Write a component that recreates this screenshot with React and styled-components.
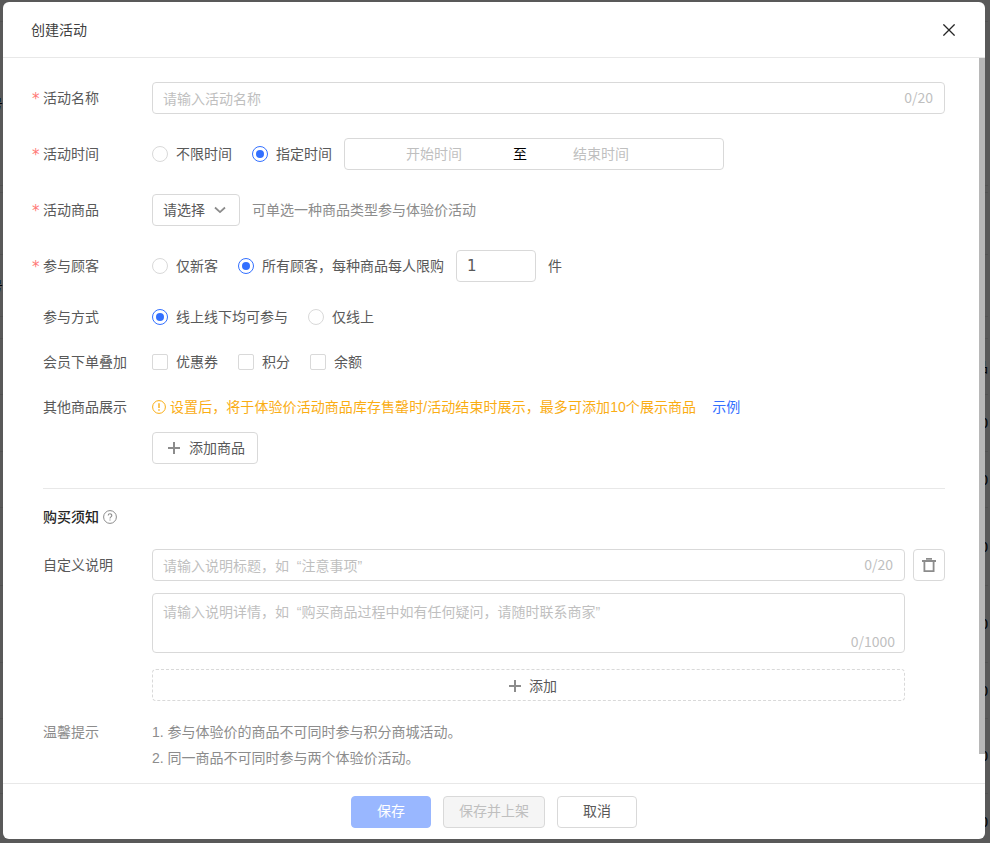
import React from 'react';
import styled, {createGlobalStyle} from 'styled-components';

const GlobalStyle = createGlobalStyle`
  html, body {
    margin: 0;
    padding: 0;
    background: #ffffff;
  }
  body {
    font-family: "Liberation Sans", "Noto Sans CJK SC", sans-serif;
    font-size: 14px;
    line-height: 22px;
    color: #595959;
  }
  * {
    box-sizing: border-box;
  }
`;

const backdropRows = [
  {height: 22},
  {height: 164, left: '号'},
  {height: 7},
  {height: 62},
  {height: 62, left: '号'},
  {height: 22},
  {height: 56, right: '品'},
  {height: 57, right: '0'},
  {height: 56, right: '0'},
  {height: 78, right: '0'},
  {height: 77, right: '0'},
  {height: 56, right: '0'},
  {height: 75, right: '0'},
  {height: 56, right: '0'},
];

const Field = ({label, required, $tall, children, ...rest}) => (
  <FormRow {...rest}>
    <Label $tall={$tall}>{required && <Star>*</Star>}{label}</Label>
    <Control>{children}</Control>
  </FormRow>
);

const Radio = ({checked, children}) => (
  <Choice>
    <RadioMark $checked={checked}/>
    {children}
  </Choice>
);

const Check = ({children}) => (
  <Choice>
    <CheckMark/>
    {children}
  </Choice>
);

const PlusIcon = () => (
  <svg width="12" height="12" viewBox="0 0 12 12" fill="none" stroke="#8c8c8c" strokeWidth="2">
    <path d="M6 0v12M0 6h12"/>
  </svg>
);

const App = () => {
  return (
    <Page>
      <GlobalStyle/>
      {backdropRows.map((row, i) => (
        <BackdropRow key={i} $height={row.height}>
          <span>{row.left}</span>
          <span>{row.right}</span>
        </BackdropRow>
      ))}
      <Mask/>
      <Modal>
        <Header>
          <Title>创建活动</Title>
          <svg width="12" height="12" viewBox="0 0 12 12" fill="none" stroke="#262626" strokeWidth="1.3">
            <path d="M0.4 0.4l11.2 11.2M11.6 0.4L0.4 11.6"/>
          </svg>
        </Header>
        <Body>
          <Scrollbar/>
          <Field label="活动名称" required $tall $gap={24}>
            <InputBox>
              <InputPlaceholder>请输入活动名称</InputPlaceholder>
              <Count>0/20</Count>
            </InputBox>
          </Field>
          <Field label="活动时间" required $tall $gap={24}>
            <Radio>不限时间</Radio>
            <Radio checked>指定时间</Radio>
            <DateRange>
              <DateText>开始时间</DateText>
              <DateSep>至</DateSep>
              <DateText>结束时间</DateText>
            </DateRange>
          </Field>
          <Field label="活动商品" required $tall $gap={24}>
            <Select>
              请选择
              <svg width="12" height="8" viewBox="0 0 12 8" fill="none" stroke="#8c8c8c" strokeWidth="1.8">
                <path d="M1 1.5l5 4.6 5-4.6"/>
              </svg>
            </Select>
            <Hint>可单选一种商品类型参与体验价活动</Hint>
          </Field>
          <Field label="参与顾客" required $tall $gap={24}>
            <Radio>仅新客</Radio>
            <Radio checked>所有顾客，每种商品每人限购</Radio>
            <NumberBox>1</NumberBox>
            <Unit>件</Unit>
          </Field>
          <Field label="参与方式" $gap={23}>
            <Radio checked>线上线下均可参与</Radio>
            <Radio>仅线上</Radio>
          </Field>
          <Field label="会员下单叠加" $gap={23}>
            <Check>优惠券</Check>
            <Check>积分</Check>
            <Check>余额</Check>
          </Field>
          <Field label="其他商品展示" $gap={14}>
            <Warning>
              <svg width="14" height="14" viewBox="0 0 14 14" fill="none" stroke="#faad14">
                <circle cx="7" cy="7" r="6.4"/>
                <path d="M7 3.2v4.8M7 9.2v1.6" strokeWidth="1.4"/>
              </svg>
              设置后，将于体验价活动商品库存售罄时/活动结束时展示，最多可添加10个展示商品
            </Warning>
            <ExampleLink>示例</ExampleLink>
          </Field>
          <FormRow $gap={24}>
            <Label/>
            <Control>
              <OutlineButton>
                <PlusIcon/>
                添加商品
              </OutlineButton>
            </Control>
          </FormRow>
          <Divider/>
          <SectionTitle>
            购买须知
            <svg width="14" height="14" viewBox="0 0 14 14" fill="none" stroke="#8c8c8c">
              <circle cx="7" cy="7" r="6.4"/>
              <path d="M5.2 5.6c0-2.4 3.6-2.4 3.6-.1 0 1.4-1.8 1.4-1.8 2.9M7 9.4v1.2" strokeWidth="1.1"/>
            </svg>
          </SectionTitle>
          <Field label="自定义说明" $tall $gap={12}>
            <InputBox>
              <InputPlaceholder>请输入说明标题，如&nbsp; “注意事项”</InputPlaceholder>
              <Count>0/20</Count>
            </InputBox>
            <IconButton>
              <svg width="14" height="14" viewBox="0 0 14 14" fill="none" stroke="#8c8c8c" strokeWidth="1.8">
                <path d="M0 3h14M4 0.9h6M2.4 3v10.1h9.2V3"/>
              </svg>
            </IconButton>
          </Field>
          <FormRow $gap={16}>
            <Label/>
            <TextArea>
              <Placeholder>请输入说明详情，如&nbsp; “购买商品过程中如有任何疑问，请随时联系商家”</Placeholder>
              <AreaCount>0/1000</AreaCount>
            </TextArea>
          </FormRow>
          <FormRow $gap={20}>
            <Label/>
            <DashedButton>
              <PlusIcon/>
              添加
            </DashedButton>
          </FormRow>
          <FormRow $gap={0}>
            <TipLabel>温馨提示</TipLabel>
            <TipList>
              <Tip>1. 参与体验价的商品不可同时参与积分商城活动。</Tip>
              <Tip>2. 同一商品不可同时参与两个体验价活动。</Tip>
            </TipList>
          </FormRow>
        </Body>
        <Footer>
          <PrimaryButton>保存</PrimaryButton>
          <DisabledButton>保存并上架</DisabledButton>
          <FooterButton>取消</FooterButton>
        </Footer>
      </Modal>
    </Page>
  );
};

const Page = styled.div`
  position: relative;
  width: 990px;
  height: 843px;
  overflow: hidden;
  background: #ffffff;
`;

const BackdropRow = styled.div`
  display: flex;
  justify-content: space-between;
  align-items: center;
  height: ${props => props.$height}px;
  margin: 0 2px 0 -11px;
  border-bottom: 1px solid #e8e8e8;
  color: #000000;
`;

const Mask = styled.div`
  position: absolute;
  inset: 0;
  background: rgba(0, 0, 0, 0.65);
`;

const Modal = styled.div`
  position: absolute;
  left: 3px;
  top: 2px;
  width: 982px;
  height: 837px;
  display: flex;
  flex-direction: column;
  overflow: hidden;
  background: #ffffff;
  border-radius: 6px;
`;

const Header = styled.div`
  flex: none;
  height: 56px;
  display: flex;
  align-items: center;
  justify-content: space-between;
  padding: 1px 30px 0 28px;
  border-bottom: 1px solid #e8e8e8;
`;

const Title = styled.div`
  color: #404040;
`;

const Body = styled.div`
  position: relative;
  flex: 1;
  min-height: 0;
  overflow: hidden;
  padding: 24px 40px 0;
`;

const Scrollbar = styled.div`
  position: absolute;
  top: 0;
  right: 0;
  width: 6px;
  height: 696px;
  background: #b8b8b8;
`;

const FormRow = styled.div`
  display: flex;
  align-items: flex-start;
  margin-bottom: ${props => props.$gap}px;
`;

const Label = styled.div`
  position: relative;
  flex: none;
  width: 109px;
  min-height: 22px;
  padding-top: ${props => props.$tall ? 5 : 0}px;
  color: #595959;
`;

const Star = styled.span`
  position: absolute;
  left: -11px;
  top: 6px;
  color: #ff7875;
  font-family: "DejaVu Sans", sans-serif;
  font-size: 15px;
`;

const Control = styled.div`
  flex: 1;
  display: flex;
  align-items: center;
  min-width: 0;
`;

const Choice = styled.label`
  display: flex;
  align-items: center;
  gap: 8px;
  margin-right: 20px;
  color: #595959;
  white-space: nowrap;
`;

const RadioMark = styled.span`
  flex: none;
  position: relative;
  width: 16px;
  height: 16px;
  border-radius: 50%;
  border: 1px solid ${props => props.$checked ? '#3370ff' : '#d9d9d9'};

  &::after {
    content: "";
    display: ${props => props.$checked ? 'block' : 'none'};
    position: absolute;
    inset: 3px;
    border-radius: 50%;
    background: #3370ff;
  }
`;

const CheckMark = styled.span`
  flex: none;
  width: 16px;
  height: 16px;
  border-radius: 2px;
  border: 1px solid #d9d9d9;
`;

const Box = styled.div`
  height: 32px;
  display: flex;
  align-items: center;
  border: 1px solid #d9d9d9;
  border-radius: 4px;
  background: #ffffff;
`;

const InputBox = styled(Box)`
  flex: 1;
  justify-content: space-between;
  padding: 0 11px 0 10px;
`;

const Placeholder = styled.span`
  color: #bfbfbf;
  white-space: nowrap;
`;

const InputPlaceholder = styled(Placeholder)`
  margin-top: 2px;
`;

const Count = styled.span`
  margin-bottom: 2px;
  color: #bfbfbf;
  font-family: "Noto Sans CJK SC", sans-serif;
  line-height: 20px;
`;

const DateRange = styled(Box)`
  width: 380px;
  margin-left: -8px;
  padding-left: 61px;
`;

const DateText = styled.span`
  color: #bfbfbf;
`;

const DateSep = styled.span`
  margin: 0 46px 0 51px;
  color: #000000;
`;

const Select = styled(Box)`
  width: 88px;
  justify-content: space-between;
  padding: 0 13px 0 10px;
  color: #595959;
  white-space: nowrap;
`;

const Hint = styled.span`
  margin-left: 12px;
  color: #8c8c8c;
`;

const NumberBox = styled(Box)`
  width: 80px;
  margin-left: -8px;
  padding-left: 10px;
  color: #595959;
  font-family: "DejaVu Sans", sans-serif;
  font-size: 15px;
`;

const Unit = styled.span`
  margin-left: 12px;
  color: #595959;
`;

const Warning = styled.div`
  display: flex;
  align-items: center;
  gap: 4px;
  color: #faad14;
  letter-spacing: 0.07px;
  white-space: nowrap;
`;

const ExampleLink = styled.a`
  margin-left: 16px;
  color: #3370ff;
`;

const OutlineButton = styled(Box)`
  width: 106px;
  gap: 9px;
  padding-left: 15px;
  color: #595959;
`;

const Divider = styled.div`
  height: 1px;
  background: #e8e8e8;
`;

const SectionTitle = styled.div`
  display: flex;
  align-items: center;
  gap: 4px;
  height: 22px;
  margin: 17px 0 21px;
  color: #262626;
  font-weight: 500;
`;

const IconButton = styled(Box)`
  flex: none;
  width: 32px;
  margin-left: 8px;
  justify-content: center;
`;

const TextArea = styled.div`
  position: relative;
  flex: none;
  width: 753px;
  height: 60px;
  padding: 7px 10px;
  border: 1px solid #d9d9d9;
  border-radius: 4px;
`;

const AreaCount = styled.span`
  position: absolute;
  right: 9px;
  bottom: 0;
  color: #bfbfbf;
  font-family: "Noto Sans CJK SC", sans-serif;
`;

const DashedButton = styled(Box)`
  flex: none;
  width: 753px;
  justify-content: center;
  gap: 8px;
  padding: 1px 0 0 9px;
  border-style: dashed;
  color: #595959;
`;

const TipLabel = styled(Label)`
  color: #8c8c8c;
`;

const TipList = styled.div`
  display: flex;
  flex-direction: column;
  gap: 4px;
`;

const Tip = styled.div`
  color: #8c8c8c;
`;

const Footer = styled.div`
  flex: none;
  height: 56px;
  display: flex;
  align-items: center;
  justify-content: center;
  gap: 12px;
  border-top: 1px solid #e8e8e8;
`;

const FooterButton = styled(Box)`
  width: 80px;
  justify-content: center;
  padding-bottom: 2px;
  color: #595959;
`;

const PrimaryButton = styled(FooterButton)`
  border-color: #99b7ff;
  background: #99b7ff;
  color: #ffffff;
`;

const DisabledButton = styled(FooterButton)`
  width: 102px;
  background: #f5f5f5;
  color: #bfbfbf;
`;

export default App;
